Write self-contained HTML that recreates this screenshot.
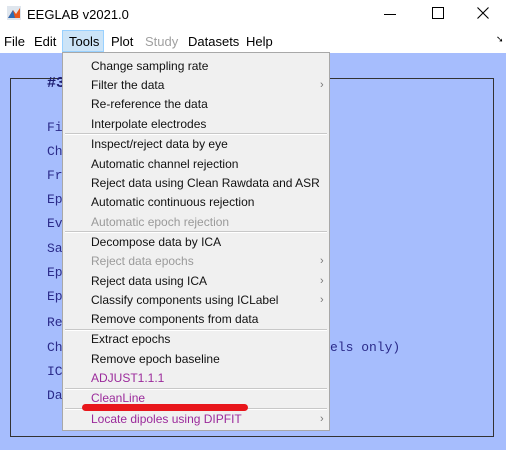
<!DOCTYPE html><html><head><style>
body{margin:0;width:506px;height:450px;overflow:hidden;background:#a6bdfd;font-family:"Liberation Sans",sans-serif;position:relative}
.tb{position:absolute;left:0;top:0;width:506px;height:30px;background:#fff}
.mb{position:absolute;left:0;top:30px;width:506px;height:23px;background:#fff;font-size:13px}
.mb span{position:absolute;top:4px}
.panel{position:absolute;left:10px;top:78px;width:482px;height:357px;border:1px solid #333}
.bt{position:absolute;font-family:"Liberation Mono",monospace;font-size:13px;color:#2b2b8a;left:47px}
.menu{position:absolute;left:62px;top:52px;width:266px;height:377px;background:#f0f0f0;border:1px solid #a8a8a8}
.it{position:absolute;left:28px;font-size:12px;color:#111;white-space:nowrap}
.dis{color:#9a9a9a}.pu{color:#9b2a9b}
.sep{position:absolute;left:2px;width:262px;height:1px;background:#c8c8c8;border-bottom:1px solid #fff}
.ar{position:absolute;left:257px;font-size:11px;color:#777}
</style></head><body>
<div class="tb">
<svg style="position:absolute;left:7px;top:6px" width="14" height="14"><rect width="14" height="14" fill="#dfe6ee"/><path d="M1 12 L6 4 L9 8 L13 2 L13 12Z" fill="#e8571b"/><path d="M1 12 L6 4 L8 12Z" fill="#2d6bb5"/></svg>
<span style="position:absolute;left:27px;top:7px;font-size:13px">EEGLAB v2021.0</span>
<div style="position:absolute;left:384px;top:14px;width:12px;height:1px;background:#000"></div>
<div style="position:absolute;left:432px;top:7px;width:10px;height:10px;border:1px solid #000"></div>
<svg style="position:absolute;left:477px;top:7px" width="12" height="12"><path d="M0.5 0.5L11.5 11.5M11.5 0.5L0.5 11.5" stroke="#000" stroke-width="1.1"/></svg>
</div>
<div class="mb">
<span style="left:4px">File</span><span style="left:34px">Edit</span>
<div style="position:absolute;left:62px;top:0;width:42px;height:22px;background:#cce4f7;border:1px solid #99d1ff;box-sizing:border-box"></div>
<span style="left:69px">Tools</span><span style="left:111px">Plot</span><span style="left:145px;color:#a0a0a0">Study</span><span style="left:188px">Datasets</span><span style="left:246px">Help</span>
<span style="left:496px;font-size:9px">➘</span>
</div>
<div class="panel"></div>
<div class="bt" style="top:75px;font-weight:bold;font-size:15px;color:#1c1c70">#3</div>
<div class="bt" style="top:120px">Fi</div><div class="bt" style="top:144px">Ch</div><div class="bt" style="top:168px">Fr</div>
<div class="bt" style="top:192px">Ep</div><div class="bt" style="top:216px">Ev</div><div class="bt" style="top:241px">Sa</div>
<div class="bt" style="top:265px">Ep</div><div class="bt" style="top:289px">Ep</div><div class="bt" style="top:315px">Re</div>
<div class="bt" style="top:340px">Ch</div><div class="bt" style="top:340px;left:330px">els only)</div>
<div class="bt" style="top:364px">IC</div><div class="bt" style="top:388px">Da</div>
<div class="menu">
<div class="it" style="top:6px">Change sampling rate</div>
<div class="it" style="top:25px">Filter the data</div><div class="ar" style="top:26px">›</div>
<div class="it" style="top:44px">Re-reference the data</div>
<div class="it" style="top:64px">Interpolate electrodes</div>
<div class="sep" style="top:80px"></div>
<div class="it" style="top:84px">Inspect/reject data by eye</div>
<div class="it" style="top:104px">Automatic channel rejection</div>
<div class="it" style="top:123px">Reject data using Clean Rawdata and ASR</div>
<div class="it" style="top:142px">Automatic continuous rejection</div>
<div class="it dis" style="top:162px">Automatic epoch rejection</div>
<div class="sep" style="top:178px"></div>
<div class="it" style="top:182px">Decompose data by ICA</div>
<div class="it dis" style="top:201px">Reject data epochs</div><div class="ar" style="top:202px">›</div>
<div class="it" style="top:221px">Reject data using ICA</div><div class="ar" style="top:222px">›</div>
<div class="it" style="top:240px">Classify components using ICLabel</div><div class="ar" style="top:241px">›</div>
<div class="it" style="top:259px">Remove components from data</div>
<div class="sep" style="top:276px"></div>
<div class="it" style="top:279px">Extract epochs</div>
<div class="it" style="top:299px">Remove epoch baseline</div>
<div class="it pu" style="top:318px">ADJUST1.1.1</div>
<div class="sep" style="top:335px"></div>
<div class="it pu" style="top:338px">CleanLine</div>
<div class="sep" style="top:355px"></div>
<div class="it pu" style="top:359px">Locate dipoles using DIPFIT</div><div class="ar" style="top:360px">›</div>
</div>
<div style="position:absolute;left:82px;top:404px;width:166px;height:7px;background:#e8161b;border-radius:4px"></div>
</body></html>
